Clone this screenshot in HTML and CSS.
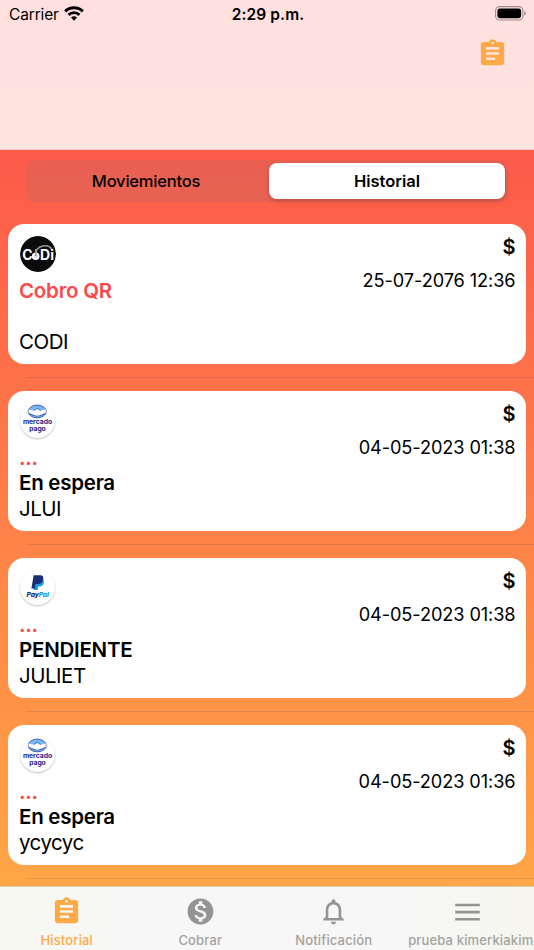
FILE: index.html
```html
<!DOCTYPE html>
<html lang="es">
<head>
<meta charset="utf-8">
<title>Historial</title>
<link rel="stylesheet" href="styles.css">
</head>
<body>
<div class="screen">
  <header class="header">
    <div class="status">
      <div class="carrier">
        <span>Carrier</span>
        <svg width="20" height="15" viewBox="0 0 20 15">
          <path d="M1.200 5.300C6 .7 14 .7 18.800 5.300" fill="none" stroke="#000" stroke-width="3"/>
          <path d="M4.500 8.900c3.200-2.900 7.800-2.900 11 0" fill="none" stroke="#000" stroke-width="2.800"/>
          <path d="M7 11.600q3-2.600 6 0l-3 3.100z"/>
        </svg>
      </div>
      <div class="time">2:29 p.m.</div>
      <div class="battery">
        <svg width="32" height="15" viewBox="0 0 32 15">
          <rect x=".6" y=".6" width="27.300" height="13.400" rx="4" fill="none" stroke="#9d8b8a" stroke-width="1.100"/>
          <rect x="2.400" y="2.400" width="23.700" height="9.800" rx="2.400"/>
          <path d="M29.300 5c2.200.9 2.200 3.700 0 4.600z" fill="#9d8b8a"/>
        </svg>
      </div>
    </div>
    <div class="actions">
      <svg class="icon accent" width="31" height="31" viewBox="0 0 24 24"><path d="M19 3h-4.180C14.400 1.840 13.300 1 12 1c-1.300 0-2.400.84-2.820 2H5c-1.100 0-2 .9-2 2v14c0 1.100.9 2 2 2h14c1.100 0 2-.9 2-2V5c0-1.100-.9-2-2-2zm-7 0c.55 0 1 .45 1 1s-.45 1-1 1-1-.45-1-1 .45-1 1-1zm2 14H7v-2h7v2zm3-4H7v-2h10v2zm0-4H7V7h10v2z"/></svg>
    </div>
  </header>

  <main class="content">
    <div class="segment">
      <div class="seg">Moviemientos</div>
      <div class="seg active">Historial</div>
    </div>

    <div class="list">
      <div class="item">
        <div class="card">
          <div class="left">
            <svg class="logo codi" viewBox="0 0 36 36">
              <circle cx="18" cy="18" r="18" fill="#0b0b0b"/>
              <path d="M15.500 18c1-9.500 13-10.500 16.500-4.500" fill="none" stroke="#98989c" stroke-width="1.600"/>
              <text x="2.300" y="24" textLength="9.500" class="brand-codi">C</text>
              <circle cx="15.700" cy="20.300" r="3" fill="#ddd" stroke="#fff" stroke-width="1.600"/>
              <path d="M15.700 13v7" stroke="#98989c" stroke-width="1.500"/>
              <text x="20" y="24" textLength="14" class="brand-codi">Di</text>
            </svg>
            <div class="title">Cobro QR</div>
            <div class="state"></div>
            <div class="name">CODI</div>
          </div>
          <div class="right">
            <div class="amount">$</div>
            <div class="date">25-07-2076 12:36</div>
          </div>
        </div>
      </div>
      <div class="item">
        <div class="card">
          <div class="left">
            <svg class="logo" viewBox="0 0 36 36">
              <ellipse cx="17.700" cy="8.700" rx="9.300" ry="6.600" fill="#74b9f5" stroke="#3a519c" stroke-width=".9"/>
              <path d="M8.800 6.600l5.200 1.200 3.700-1.800 3.700 1.800 5.200-1.200v3.600l-4.400 1.300-4.500 2.500-4.500-2.500-4.400-1.300z" fill="#fff"/>
              <path d="M9 10.500c3 1.500 5.500 3 8.700 3s5.700-1.500 8.700-3M14 8l3.700-2.500L21.400 8" fill="none" stroke="#3a519c" stroke-width=".8"/>
              <text x="18" y="22" textLength="30" class="brand-mp">mercado</text>
              <text x="18" y="28.300" textLength="17" class="brand-mp">pago</text>
            </svg>
            <div class="title">...</div>
            <div class="state">En espera</div>
            <div class="name">JLUI</div>
          </div>
          <div class="right">
            <div class="amount">$</div>
            <div class="date">04-05-2023 01:38</div>
          </div>
        </div>
      </div>
      <div class="item">
        <div class="card">
          <div class="left">
            <svg class="logo" viewBox="0 0 36 36">
              <path d="M16.200 9h6.500c2 1 2.300 3 1.400 5.300-.9 2.100-2.600 2.700-5.300 2.700l-.8 3.500h-4z" fill="#169bd7"/>
              <path d="M14 5.500h6.500c3 0 4.200 1.800 3.300 4.700-.8 3-2.700 4.100-5.800 4.100h-2l-.8 4.700h-3.500z" fill="#173075"/>
              <text x="6.700" y="27.300" textLength="23" class="brand-pp">Pay<tspan fill="#169bd7">Pal</tspan></text>
            </svg>
            <div class="title">...</div>
            <div class="state">PENDIENTE</div>
            <div class="name">JULIET</div>
          </div>
          <div class="right">
            <div class="amount">$</div>
            <div class="date">04-05-2023 01:38</div>
          </div>
        </div>
      </div>
      <div class="item">
        <div class="card">
          <div class="left">
            <svg class="logo" viewBox="0 0 36 36">
              <ellipse cx="17.700" cy="8.700" rx="9.300" ry="6.600" fill="#74b9f5" stroke="#3a519c" stroke-width=".9"/>
              <path d="M8.800 6.600l5.200 1.200 3.700-1.800 3.700 1.800 5.200-1.200v3.600l-4.400 1.300-4.500 2.500-4.500-2.500-4.400-1.300z" fill="#fff"/>
              <path d="M9 10.500c3 1.500 5.500 3 8.700 3s5.700-1.500 8.700-3M14 8l3.700-2.500L21.400 8" fill="none" stroke="#3a519c" stroke-width=".8"/>
              <text x="18" y="22" textLength="30" class="brand-mp">mercado</text>
              <text x="18" y="28.300" textLength="17" class="brand-mp">pago</text>
            </svg>
            <div class="title">...</div>
            <div class="state">En espera</div>
            <div class="name">ycycyc</div>
          </div>
          <div class="right">
            <div class="amount">$</div>
            <div class="date">04-05-2023 01:36</div>
          </div>
        </div>
      </div>
    </div>
  </main>

  <nav class="tabs">
    <div class="tab active">
      <svg class="icon" width="31" height="31" viewBox="0 0 24 24"><path d="M19 3h-4.180C14.400 1.840 13.300 1 12 1c-1.300 0-2.400.84-2.820 2H5c-1.100 0-2 .9-2 2v14c0 1.100.9 2 2 2h14c1.100 0 2-.9 2-2V5c0-1.100-.9-2-2-2zm-7 0c.55 0 1 .45 1 1s-.45 1-1 1-1-.45-1-1 .45-1 1-1zm2 14H7v-2h7v2zm3-4H7v-2h10v2zm0-4H7V7h10v2z"/></svg>
      <span>Historial</span>
    </div>
    <div class="tab">
      <svg class="icon" width="31" height="31" viewBox="0 0 24 24"><path d="M12 2C6.480 2 2 6.480 2 12s4.480 10 10 10 10-4.480 10-10S17.520 2 12 2zm1.410 16.090V20h-2.670v-1.930c-1.710-.36-3.160-1.460-3.270-3.400h1.960c.1 1.050.82 1.870 2.650 1.870 1.960 0 2.400-.98 2.400-1.590 0-.83-.44-1.610-2.670-2.140-2.480-.6-4.180-1.620-4.180-3.670 0-1.720 1.390-2.840 3.110-3.210V4h2.670v1.950c1.860.45 2.790 1.860 2.850 3.390H14.300c-.05-1.110-.64-1.870-2.220-1.870-1.500 0-2.400.68-2.400 1.640 0 .84.65 1.390 2.670 1.910s4.180 1.390 4.180 3.910c-.01 1.830-1.380 2.830-3.120 3.160z"/></svg>
      <span>Cobrar</span>
    </div>
    <div class="tab">
      <svg class="icon" width="31" height="31" viewBox="0 0 24 24"><path d="M12 22c1.100 0 2-.9 2-2h-4c0 1.100.9 2 2 2zm6-6v-5c0-3.070-1.630-5.640-4.500-6.320V4c0-.83-.67-1.500-1.500-1.500s-1.500.67-1.500 1.500v.68C7.640 5.360 6 7.920 6 11v5l-2 2v1h16v-1l-2-2zm-2 1H8v-6c0-2.480 1.510-4.500 4-4.500s4 2.020 4 4.500v6z"/></svg>
      <span>Notificación</span>
    </div>
    <div class="tab menu">
      <svg class="icon" width="31" height="31" viewBox="0 0 24 24"><path d="M2.500 19h19v-2h-19v2zm0-5.500h19v-2h-19v2zm0-7.500v2h19V6h-19z"/></svg>
      <span>prueba kimerkiakim</span>
    </div>
  </nav>
</div>
</body>
</html>
```
FILE: styles.css
```css
body {
	margin:0;
	font-family:Inter, "Liberation Sans", sans-serif;
	color:#000;
}
.screen {
	width:534px;
	height:950px;
	display:flex;
	flex-direction:column;
	overflow:hidden;
	background:linear-gradient(#fc5a4b 150px, #ffa646 886px);
}
/* header */
.header {
	flex:none;
	height:150px;
	box-sizing:border-box;
	border-bottom:1px solid #f0cfcc;
	background:linear-gradient(#ffe0df, #ffe4df);
}
.status {
	display:grid;
	grid-template-columns:1fr 1fr 1fr;
	align-items:center;
	height:28px;
	padding:0 7px 0 9px;
	font-size:15.5px;
}
.carrier {
	display:flex;
	align-items:center;
	gap:6px;
	letter-spacing:-.15px;
}
.carrier svg {
	margin:-2px 0 0 -1px;
}
.time {
	text-align:center;
	font-weight:600;
	letter-spacing:.1px;
}
.battery {
	display:flex;
	justify-content:flex-end;
	margin-top:-2px;
}
.actions {
	display:flex;
	justify-content:flex-end;
	padding:10px 26px 0 0;
}
.icon {
	display:block;
	fill:currentColor;
}
.accent {
	color:#ffaa46;
}
/* content */
.content {
	flex:1;
	min-height:0;
	overflow:hidden;
}
.segment {
	display:grid;
	grid-template-columns:240px 236px;
	height:42px;
	box-sizing:border-box;
	margin:10px 26px 22px;
	padding:3px;
	border-radius:10px;
	background:rgba(118, 118, 128, .15);
}
.seg {
	line-height:36px;
	text-align:center;
	font-size:16.5px;
	font-weight:500;
	letter-spacing:-.2px;
	border-radius:8px;
}
.seg:first-child {
	padding-right:6px;
}
.seg.active {
	background:#fff;
	font-weight:600;
	letter-spacing:0;
	box-shadow:0 2px 5px rgba(0, 0, 0, .2);
}
.item {
	height:167px;
	display:flex;
	flex-direction:column;
}
.item::after {
	content:"";
	height:1px;
	margin:13px 0 0 26px;
	background:rgba(80, 60, 60, .16);
}
.card {
	height:140px;
	box-sizing:border-box;
	display:flex;
	justify-content:space-between;
	margin:0 8px;
	padding:12px 10.5px 0 11px;
	border-radius:16px;
	background:#fff;
}
.logo {
	display:block;
	width:35px;
	height:35px;
	margin:0 0 7px 1px;
	border-radius:50%;
	box-shadow:0 1px 2px rgba(0, 0, 0, .25);
}
.logo.codi {
	width:36px;
	height:36px;
	margin-bottom:6px;
	box-shadow:none;
}
.brand-mp {
	font:700 7px Inter, sans-serif;
	text-anchor:middle;
	fill:#24248a;
}
.brand-pp {
	font:italic 800 7px Inter, sans-serif;
	fill:#173075;
}
.brand-codi {
	font:700 14px Inter, sans-serif;
	fill:#fff;
}
.title, .state, .name {
	height:26px;
	line-height:26px;
	font-size:20.5px;
	letter-spacing:-.25px;
}
.title {
	height:25px;
	color:#fc4a4c;
	font-weight:600;
}
.state {
	font-weight:600;
}
.name {
	letter-spacing:-.5px;
}
.right {
	text-align:right;
}
.amount {
	line-height:22px;
	font-size:20px;
	font-weight:600;
}
.date {
	margin-top:11px;
	line-height:22px;
	font-size:18.2px;
	letter-spacing:-.1px;
}
/* bottom tabs */
.tabs {
	flex:none;
	height:63px;
	border-top:1px solid #d9c9ad;
	display:grid;
	grid-template-columns:repeat(4, 133.5px);
	background:linear-gradient(90deg, #f7f7f0, #f7f7f7 25%, #f7f7f7 75%, #f6f5ee);
}
.tab {
	display:flex;
	flex-direction:column;
	align-items:center;
	padding-top:9px;
	color:#949492;
	font-size:13px;
	font-weight:500;
	letter-spacing:.15px;
	white-space:nowrap;
}
.tab span {
	margin-top:5px;
	line-height:16px;
	color:#a3a3a1;
}
.tab.menu span {
	padding-left:7px;
}
.tab.active, .tab.active span {
	color:#ffaa46;
}
```
